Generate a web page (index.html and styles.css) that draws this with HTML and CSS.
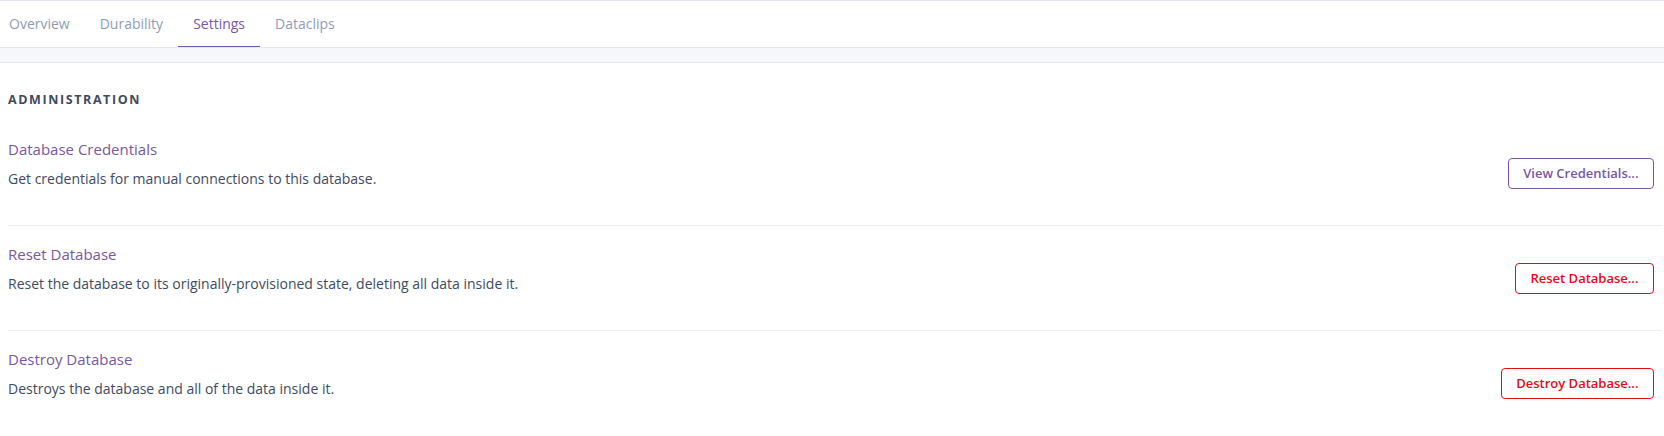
FILE: index.html
```html
<!DOCTYPE html>
<html>
<head>
<meta charset="utf-8">
<link rel="stylesheet" href="styles.css">
</head>
<body>
<nav class="tabs">
  <a class="tab">Overview</a>
  <a class="tab">Durability</a>
  <a class="tab active">Settings</a>
  <a class="tab">Dataclips</a>
</nav>
<div class="band"></div>
<main class="content">
  <h2 class="section-title">Administration</h2>
  <div class="row">
    <div class="row-text">
      <div class="row-title">Database Credentials</div>
      <div class="row-desc">Get credentials for manual connections to this database.</div>
    </div>
    <button class="btn btn-purple">View Credentials...</button>
  </div>
  <div class="row">
    <div class="row-text">
      <div class="row-title">Reset Database</div>
      <div class="row-desc">Reset the database to its originally-provisioned state, deleting all data inside it.</div>
    </div>
    <button class="btn btn-red">Reset Database...</button>
  </div>
  <div class="row">
    <div class="row-text">
      <div class="row-title">Destroy Database</div>
      <div class="row-desc">Destroys the database and all of the data inside it.</div>
    </div>
    <button class="btn btn-red">Destroy Database...</button>
  </div>
</main>
</body>
</html>
```
FILE: styles.css
```css
* { box-sizing: border-box; }
html, body { margin: 0; padding: 0; background: #fff; }
body {
  font-family: "Open Sans", Lato, sans-serif;
  color: #3f4a5e;
  overflow: hidden;
}
.tabs {
  display: flex;
  border-top: 1px solid #e3e6ee;
  height: 47px;
  margin-left: -6px;
}
.tab {
  display: flex;
  align-items: center;
  padding: 0 15px;
  font-size: 14px;
  color: #8f9cb3;
  border-bottom: 1px solid transparent;
}
.tab.active {
  color: #79589f;
  border-bottom-color: #79589f;
}
.band {
  height: 16px;
  background: #f6f7fb;
  border-top: 1px solid #e5e7ef;
  border-bottom: 1px solid #e5e7ef;
}
.content {
  padding: 0 2px 0 8px;
}
.section-title {
  margin: 29px 0 12px;
  font-size: 12.5px;
  line-height: 16px;
  font-weight: 700;
  letter-spacing: 1.6px;
  text-transform: uppercase;
  color: #3f4a5e;
}
.row {
  display: flex;
  align-items: center;
  justify-content: space-between;
  padding: 16px 8px 16px 0;
  border-top: 1px solid #eeeff2;
}
.row:first-of-type { border-top: 1px solid transparent; }
.row-text { padding-bottom: 20px; }
.row-title {
  font-size: 15px;
  line-height: 24px;
  color: #79589f;
}
.row-desc {
  margin-top: 8px;
  font-size: 14px;
  line-height: 20px;
  color: #3f4a5e;
}
.btn {
  height: 31px;
  padding: 0 14.5px;
  background: #fff;
  border-radius: 4px;
  font-family: inherit;
  font-size: 13px;
  font-weight: 600;
}
.btn-purple { border: 1px solid #79589f; color: #79589f; }
.btn-red { border: 1px solid #e20c19; color: #e20c19; }
```
